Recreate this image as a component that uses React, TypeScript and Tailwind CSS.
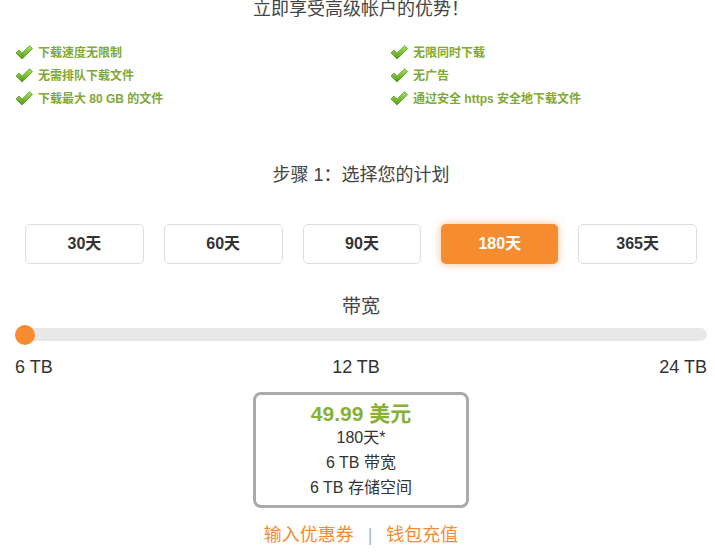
import React from "react";

const Check = () => (
  <svg width="18" height="15" viewBox="0 0 18 15" className="shrink-0">
    <defs>
      <linearGradient id="cg" x1="0" y1="0" x2="0" y2="1">
        <stop offset="0" stopColor="#a6e85a" />
        <stop offset="1" stopColor="#4e9b12" />
      </linearGradient>
    </defs>
    <polygon
      points="1,8 4,5 7,8.2 14.5,0.8 17.5,3.6 7,14"
      fill="url(#cg)"
      stroke="#5b9323"
      strokeWidth="0.8"
      strokeLinejoin="round"
    />
  </svg>
);

const Feature = ({ text }: { text: string }) => (
  <div className="h-[23px] flex items-center gap-[5px]">
    <Check />
    <span className="text-[12px] font-bold text-[#7fa935]">{text}</span>
  </div>
);

export default function App() {
  const plans = ["30天", "60天", "90天", "180天", "365天"];
  return (
    <div className="w-[715px] h-[552px] overflow-hidden bg-white">
      <div className="w-[722px] font-['Liberation_Sans','Noto_Sans_CJK_SC',sans-serif] text-[#333]">
        <div className="text-center text-[18px] leading-[18px] text-[#444]">
          立即享受高级帐户的优势！
        </div>
        <div className="mt-[23px] pl-[15px] grid grid-cols-[375px_1fr]">
          <div>
            <Feature text="下载速度无限制" />
            <Feature text="无需排队下载文件" />
            <Feature text="下载最大 80 GB 的文件" />
          </div>
          <div>
            <Feature text="无限同时下载" />
            <Feature text="无广告" />
            <Feature text="通过安全 https 安全地下载文件" />
          </div>
        </div>
        <div className="mt-[53px] text-center text-[18px] leading-[24px] text-[#444]">
          步骤 1：选择您的计划
        </div>
        <div className="mt-[37px] px-[25px] flex gap-[20px]">
          {plans.map((p) =>
            p === "180天" ? (
              <div
                key={p}
                className="flex-1 h-[40px] rounded-[5px] bg-[#f68b2f] text-white flex items-center justify-center text-[16px] font-bold shadow-[0_0_8px_rgba(246,139,47,0.55)]"
              >
                {p}
              </div>
            ) : (
              <div
                key={p}
                className="flex-1 h-[40px] rounded-[5px] border border-[#dddddd] bg-white flex items-center justify-center text-[16px] font-bold text-[#333]"
              >
                {p}
              </div>
            )
          )}
        </div>
        <div className="mt-[31px] text-center text-[19px] leading-[24px] text-[#444]">带宽</div>
        <div className="mt-[9px] px-[15px]">
          <div className="relative h-[13px] rounded-full bg-[#e8e8e8]">
            <div className="absolute left-0 top-[-3.5px] w-[20px] h-[20px] rounded-full bg-[#f68b2f]" />
          </div>
        </div>
        <div className="mt-[16px] px-[15px] grid grid-cols-3 text-[18px] leading-[20px] text-[#333]">
          <span className="text-left">6 TB</span>
          <span className="text-center pr-[10px]">12 TB</span>
          <span className="text-right">24 TB</span>
        </div>
        <div className="mt-[15px] flex justify-center">
          <div className="w-[216px] border-[3px] border-[#aaaaaa] rounded-[8px] pt-[7.5px] pb-[5.5px] text-center">
            <div className="text-[21px] leading-[22px] font-bold text-[#86b135]">49.99 美元</div>
            <div className="text-[16px] leading-[25px] text-[#333]">180天*</div>
            <div className="text-[16px] leading-[25px] text-[#333]">6 TB 带宽</div>
            <div className="text-[16px] leading-[25px] text-[#333]">6 TB 存储空间</div>
          </div>
        </div>
        <div className="mt-[15px] flex justify-center text-[18px] leading-[24px]">
          <span className="text-[#f68b2f]">输入优惠券</span>
          <span className="px-[14px] text-[#a9bccf]">|</span>
          <span className="text-[#f68b2f]">钱包充值</span>
        </div>
      </div>
    </div>
  );
}
